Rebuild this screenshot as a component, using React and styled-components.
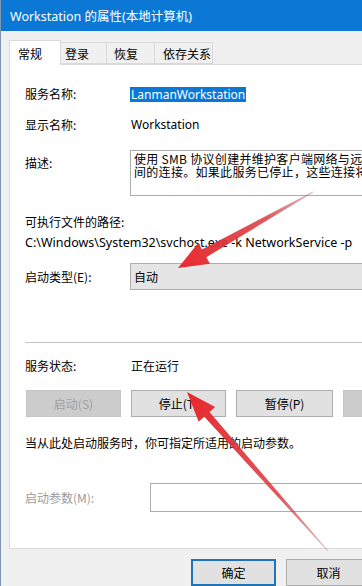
import React from "react";
import styled, { createGlobalStyle } from "styled-components";

const GlobalStyle = createGlobalStyle`
  html, body {
    margin: 0;
    padding: 0;
    background: #f0f0f0;
  }
  body {
    font-family: "Noto Sans", "Noto Sans CJK SC", sans-serif;
    font-size: 12px;
    color: #000;
  }
`;

const Window = styled.div`
  position: relative;
  width: 362px;
  height: 586px;
  overflow: hidden;
  background: #f0f0f0;
  border-left: 1px solid #7d97b3;
  box-sizing: border-box;
`;

const TitleBar = styled.div`
  height: 31px;
  background: #0a78d4;
  color: #fff;
  display: flex;
  align-items: center;
  padding-left: 9px;
  font-size: 12.5px;
  white-space: nowrap;
`;

const Body = styled.div`
  padding: 9px 0 0 8px;
  width: 440px;
`;

const TabRow = styled.div`
  display: flex;
  align-items: flex-end;
  height: 24px;
  position: relative;
  z-index: 1;
`;

const Tab = styled.div`
  box-sizing: border-box;
  width: ${(p) => p.$w}px;
  padding-left: ${(p) => p.$pad}px;
  height: ${(p) => (p.$active ? 25 : 22)}px;
  margin-bottom: ${(p) => (p.$active ? -1 : 0)}px;
  background: ${(p) => (p.$active ? "#fff" : "#f0f0f0")};
  border: 1px solid #d9d9d9;
  border-bottom: ${(p) => (p.$active ? "none" : "1px solid #d9d9d9")};
  border-left: ${(p) => (p.$first || p.$active ? "1px solid #d9d9d9" : "none")};
  display: flex;
  align-items: center;
  font-family: "Noto Sans CJK SC", sans-serif;
  font-size: 12px;
  white-space: nowrap;
`;

const Panel = styled.div`
  box-sizing: border-box;
  height: 485px;
  background: #fff;
  border: 1px solid #d9d9d9;
  padding-left: 15px;
  display: flex;
  flex-direction: column;
`;

const Field = styled.div`
  display: grid;
  grid-template-columns: ${(p) => p.$col || 106}px 1fr;
  align-items: ${(p) => (p.$top ? "start" : "center")};
  margin-top: ${(p) => p.$mt}px;
  min-height: ${(p) => p.$h || 20}px;
`;

const Label = styled.div`
  font-family: "Noto Sans CJK SC", sans-serif;
  line-height: 14px;
  color: ${(p) => (p.$muted ? "#9a9a9a" : "#000")};
  padding-top: ${(p) => p.$pt || 0}px;
  white-space: nowrap;
`;

const Value = styled.div`
  line-height: 14px;
  white-space: nowrap;
`;

const Selected = styled.span`
  display: inline-block;
  background: #0a78d4;
  color: #fff;
  line-height: 15px;
  padding: 0 1px;
  margin-left: -1px;
`;

const TextBox = styled.div`
  box-sizing: border-box;
  margin-left: -1px;
  height: ${(p) => p.$h}px;
  overflow: hidden;
  border: 1px solid #adadad;
  background: #fff;
  padding: 1px 0 0 3px;
  font-family: "Noto Sans CJK SC", sans-serif;
  line-height: 13px;
  letter-spacing: 0.3px;
  white-space: nowrap;
`;

const Combo = styled.div`
  box-sizing: border-box;
  margin-left: -1px;
  height: 27px;
  background: #e5e5e5;
  border: 1px solid #adadad;
  display: flex;
  align-items: center;
  padding-left: 3px;
  font-family: "Noto Sans CJK SC", sans-serif;
`;

const Text = styled.div`
  margin-top: ${(p) => p.$mt}px;
  line-height: 14px;
  white-space: nowrap;
  font-size: ${(p) => (p.$cjk ? 12 : 12.5)}px;
  font-family: ${(p) => (p.$cjk ? '"Noto Sans CJK SC", sans-serif' : "inherit")};
`;

const Separator = styled.div`
  margin-top: ${(p) => p.$mt}px;
  height: 1px;
  background: #c4c4c4;
`;

const ButtonRow = styled.div`
  display: flex;
  gap: 10px;
  margin-top: ${(p) => p.$mt}px;
  padding-left: ${(p) => p.$pl || 0}px;
`;

const Button = styled.div`
  box-sizing: border-box;
  width: ${(p) => p.$w}px;
  height: 27px;
  flex: none;
  display: flex;
  align-items: center;
  justify-content: center;
  background: ${(p) => (p.$disabled ? "#cccccc" : "#e1e1e1")};
  color: ${(p) => (p.$disabled ? "#9f9f9f" : "#000")};
  border: ${(p) => (p.$default ? "2px solid #1f73b7" : p.$disabled ? "1px solid #c4c4c4" : "1px solid #adadad")};
  font-family: "Noto Sans CJK SC", sans-serif;
  white-space: nowrap;
`;

const Footer = styled(ButtonRow)`
  margin-top: 10px;
  padding-left: 182px;
`;

const Overlay = styled.svg`
  position: absolute;
  left: 0;
  top: 0;
  pointer-events: none;
`;

function arrowPoints(tip, tail, headLen, headHalf, neckHalf, tailHalf) {
  const dx = tip[0] - tail[0];
  const dy = tip[1] - tail[1];
  const len = Math.hypot(dx, dy);
  const ux = dx / len;
  const uy = dy / len;
  const nx = -uy;
  const ny = ux;
  const bx = tip[0] - ux * headLen;
  const by = tip[1] - uy * headLen;
  const pts = [
    [tail[0] + nx * tailHalf, tail[1] + ny * tailHalf],
    [bx + nx * neckHalf, by + ny * neckHalf],
    [bx + nx * headHalf, by + ny * headHalf],
    tip,
    [bx - nx * headHalf, by - ny * headHalf],
    [bx - nx * neckHalf, by - ny * neckHalf],
    [tail[0] - nx * tailHalf, tail[1] - ny * tailHalf],
  ];
  return pts.map((q) => q.map((v) => v.toFixed(1)).join(",")).join(" ");
}

const arrows = [
  { id: "a1", tip: [177, 268], tail: [312, 192], head: 30, half: 12, neck: 4.5, end: 0.6 },
  { id: "a2", tip: [186, 392], tail: [327, 551], head: 30, half: 11, neck: 3.5, end: 0.5 },
];

function Arrows() {
  return (
    <Overlay width="362" height="586" viewBox="0 0 362 586">
      <defs>
        {arrows.map((a) => (
          <linearGradient
            key={a.id}
            id={a.id}
            gradientUnits="userSpaceOnUse"
            x1={a.tail[0]}
            y1={a.tail[1]}
            x2={a.tip[0]}
            y2={a.tip[1]}
          >
            <stop offset="0" stopColor="#b04a55" stopOpacity="0.35" />
            <stop offset="0.35" stopColor="#d83a40" stopOpacity="0.85" />
            <stop offset="1" stopColor="#e8292d" />
          </linearGradient>
        ))}
      </defs>
      {arrows.map((a) => (
        <polygon
          key={a.id}
          points={arrowPoints(a.tip, a.tail, a.head, a.half, a.neck, a.end)}
          fill={`url(#${a.id})`}
        />
      ))}
    </Overlay>
  );
}

const tabs = [
  { label: "常规", w: 52, pad: 8, active: true },
  { label: "登录", w: 46, pad: 4 },
  { label: "恢复", w: 48, pad: 7 },
  { label: "依存关系", w: 58, pad: 8 },
];

export default function App() {
  return (
    <>
      <GlobalStyle />
      <Window>
        <TitleBar>Workstation 的属性(本地计算机)</TitleBar>
        <Body>
          <TabRow>
            {tabs.map((t, i) => (
              <Tab key={t.label} $w={t.w} $pad={t.pad} $active={t.active} $first={i === 0}>
                {t.label}
              </Tab>
            ))}
          </TabRow>
          <Panel>
            <Field $mt={19}>
              <Label>服务名称:</Label>
              <Value>
                <Selected>LanmanWorkstation</Selected>
              </Value>
            </Field>
            <Field $mt={11}>
              <Label>显示名称:</Label>
              <Value>Workstation</Value>
            </Field>
            <Field $mt={15} $top $h={46}>
              <Label $pt={6}>描述:</Label>
              <TextBox $h={46}>
                <div>使用 SMB 协议创建并维护客户端网络与远程服务器之</div>
                <div>间的连接。如果此服务已停止，这些连接将无法使用。</div>
              </TextBox>
            </Field>
            <Text $mt={19} $cjk>可执行文件的路径:</Text>
            <Text $mt={7}>C:\Windows\System32\svchost.exe -k NetworkService -p</Text>
            <Field $mt={13} $h={27}>
              <Label>启动类型(E):</Label>
              <Combo>自动</Combo>
            </Field>
            <Separator $mt={52} />
            <Field $mt={16} $h={14}>
              <Label>服务状态:</Label>
              <Value>
                <Label>正在运行</Label>
              </Value>
            </Field>
            <ButtonRow $mt={17} $pl={1}>
              <Button $w={95} $disabled>启动(S)</Button>
              <Button $w={95}>停止(T)</Button>
              <Button $w={97}>暂停(P)</Button>
              <Button $w={95} $disabled>恢复(R)</Button>
            </ButtonRow>
            <Text $mt={19} $cjk>当从此处启动服务时，你可指定所适用的启动参数。</Text>
            <Field $mt={33} $col={126} $h={29}>
              <Label $muted>启动参数(M):</Label>
              <TextBox $h={29} />
            </Field>
          </Panel>
          <Footer>
            <Button $w={85} $default>确定</Button>
            <Button $w={85}>取消</Button>
            <Button $w={85}>应用(A)</Button>
          </Footer>
        </Body>
        <Arrows />
      </Window>
    </>
  );
}
